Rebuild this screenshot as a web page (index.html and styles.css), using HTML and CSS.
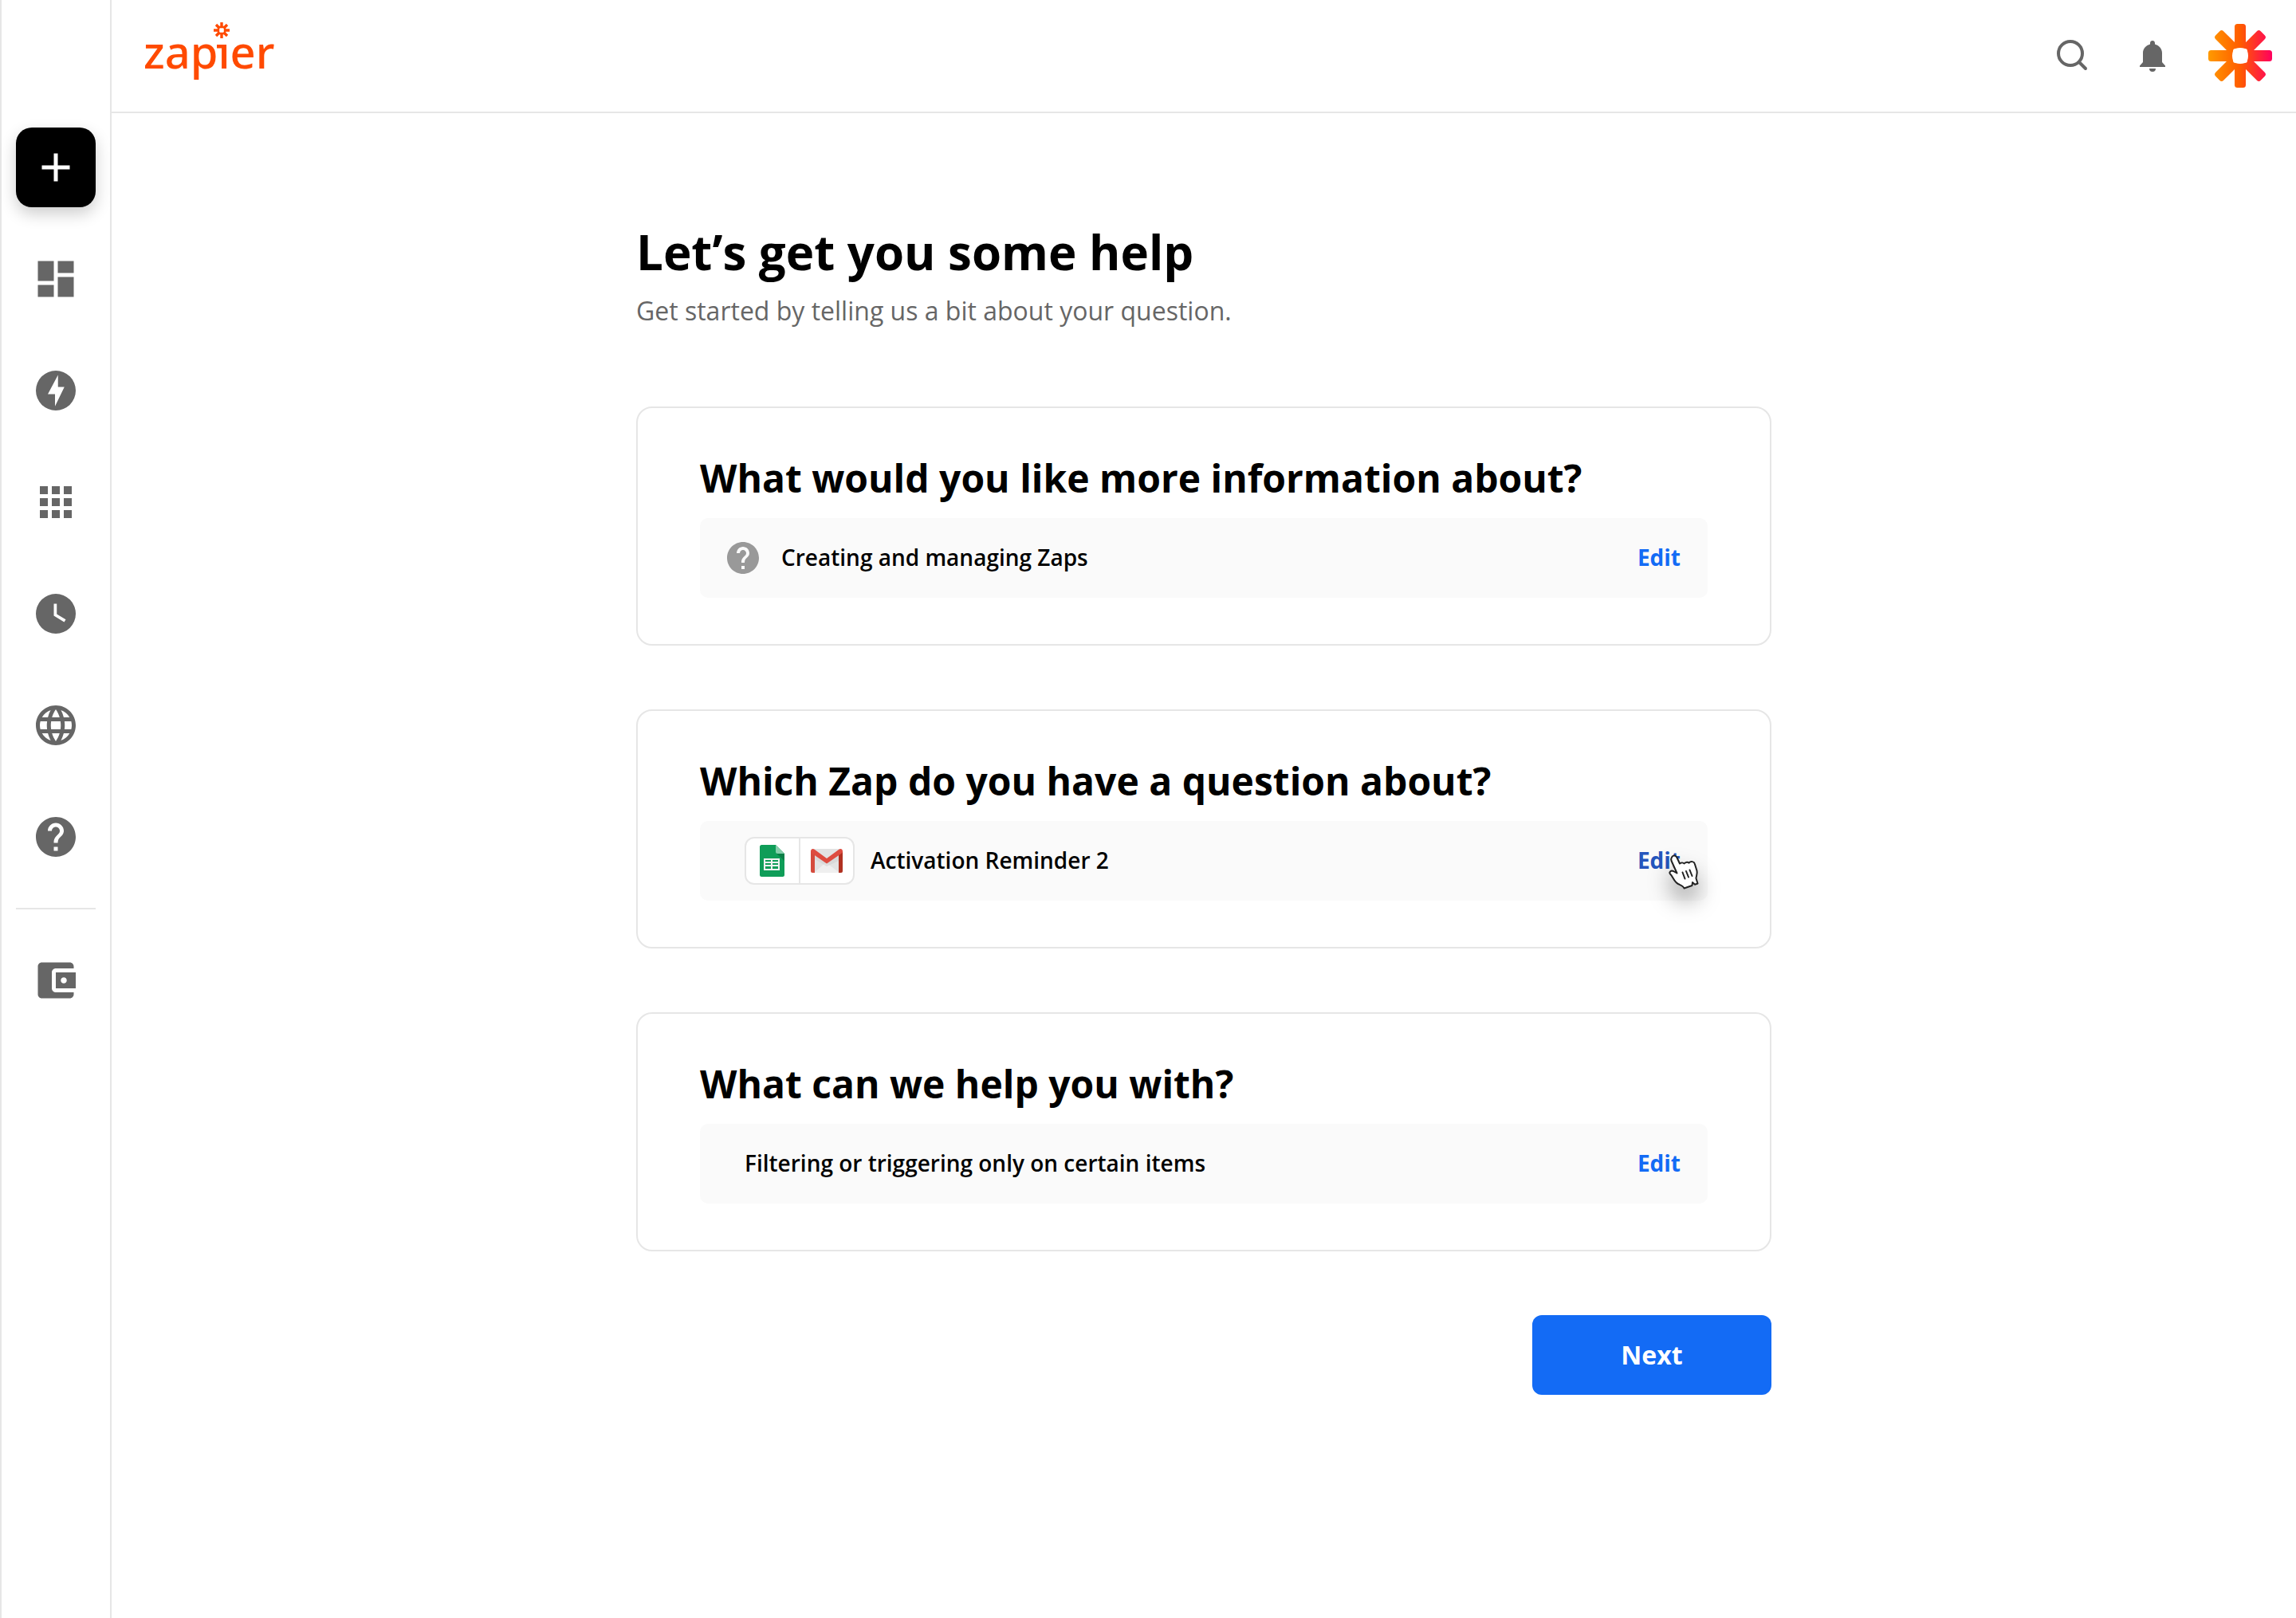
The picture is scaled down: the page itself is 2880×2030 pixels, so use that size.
FILE: index.html
```
<!DOCTYPE html>
<html lang="en">
<head>
    <meta charset="utf-8">
    <title>Get help | Zapier</title>
    <link rel="stylesheet" href="styles.css">
</head>
<body>
    <nav class="sidebar" aria-label="Main">
        <button class="create-btn" aria-label="Create Zap">
            <svg class="icon" viewBox="0 0 24 24"><path d="M19 13h-6v6h-2v-6H5v-2h6V5h2v6h6z"/></svg>
        </button>
        <a class="nav-link" href="#" aria-label="Dashboard">
            <svg class="icon" viewBox="0 0 24 24"><path d="M3 13h8V3H3v10zm0 8h8v-6H3v6zm10 0h8V11h-8v10zm0-18v6h8V3h-8z"/></svg>
        </a>
        <a class="nav-link" href="#" aria-label="Zaps">
            <svg class="icon" viewBox="0 0 24 24"><path fill-rule="evenodd" d="M12 2a10 10 0 1 0 0 20 10 10 0 0 0 0-20zm-.4 17.9v-6.1H8l5.1-9.6v6h3.2z"/></svg>
        </a>
        <a class="nav-link" href="#" aria-label="My Apps">
            <svg class="icon" viewBox="0 0 24 24"><path d="M4 8h4V4H4v4zm6 12h4v-4h-4v4zm-6 0h4v-4H4v4zm0-6h4v-4H4v4zm6 0h4v-4h-4v4zm6-10v4h4V4h-4zm-6 4h4V4h-4v4zm6 6h4v-4h-4v4zm0 6h4v-4h-4v4z"/></svg>
        </a>
        <a class="nav-link" href="#" aria-label="Task History">
            <svg class="icon" viewBox="0 0 24 24"><path fill-rule="evenodd" d="M12 2a10 10 0 1 0 0 20 10 10 0 0 0 0-20zm4.2 14.2L11 13V7h1.5v5.2l4.5 2.7z"/></svg>
        </a>
        <a class="nav-link" href="#" aria-label="Explore">
            <svg class="icon" viewBox="0 0 24 24"><path d="M11.99 2C6.47 2 2 6.48 2 12s4.47 10 9.99 10C17.52 22 22 17.52 22 12S17.52 2 11.99 2zm6.93 6h-2.95c-.32-1.25-.78-2.45-1.38-3.56 1.84.63 3.37 1.91 4.33 3.56zM12 4.04c.83 1.2 1.48 2.53 1.91 3.96h-3.82c.43-1.43 1.08-2.76 1.91-3.96zM4.26 14C4.1 13.36 4 12.69 4 12s.1-1.36.26-2h3.38c-.08.66-.14 1.32-.14 2s.06 1.34.14 2H4.26zm.82 2h2.95c.32 1.25.78 2.45 1.38 3.56-1.84-.63-3.37-1.9-4.33-3.56zm2.95-8H5.08c.96-1.66 2.49-2.93 4.33-3.56C8.81 5.55 8.35 6.75 8.03 8zM12 19.96c-.83-1.2-1.48-2.53-1.91-3.96h3.82c-.43 1.43-1.08 2.76-1.91 3.96zM14.34 14H9.66c-.09-.66-.16-1.32-.16-2s.07-1.35.16-2h4.68c.09.65.16 1.32.16 2s-.07 1.34-.16 2zm.25 5.56c.6-1.11 1.06-2.31 1.38-3.56h2.95c-.96 1.65-2.49 2.93-4.33 3.56zM16.36 14c.08-.66.14-1.32.14-2s-.06-1.34-.14-2h3.38c.16.64.26 1.31.26 2s-.1 1.36-.26 2h-3.38z"/></svg>
        </a>
        <a class="nav-link" href="#" aria-label="Get Help">
            <svg class="icon" viewBox="0 0 24 24"><path d="M12 2C6.48 2 2 6.48 2 12s4.48 10 10 10 10-4.48 10-10S17.52 2 12 2zm1 17h-2v-2h2v2zm2.07-7.75l-.9.92C13.45 12.9 13 13.5 13 15h-2v-.5c0-1.1.45-2.1 1.17-2.83l1.24-1.26c.37-.36.59-.86.59-1.41 0-1.1-.9-2-2-2s-2 .9-2 2H8c0-2.21 1.79-4 4-4s4 1.79 4 4c0 .88-.36 1.68-.93 2.25z"/></svg>
        </a>
        <hr class="divider">
        <a class="nav-link" href="#" aria-label="Billing">
            <svg class="icon" viewBox="0 0 24 24"><path d="M21 18v1c0 1.1-.9 2-2 2H5c-1.11 0-2-.9-2-2V5c0-1.1.89-2 2-2h14c1.1 0 2 .9 2 2v1h-9c-1.11 0-2 .9-2 2v8c0 1.1.89 2 2 2h9zm-9-2h10V8H12v8zm4-2.5c-.83 0-1.5-.67-1.5-1.5s.67-1.5 1.5-1.5 1.5.67 1.5 1.5-.67 1.5-1.5 1.5z"/></svg>
        </a>
    </nav>

    <div class="page">
        <header class="header">
            <a class="logo" href="#">
                <span class="logo-text">zapier</span>
                <svg class="logo-star" viewBox="0 0 20 33">
                    <path d="M10 0v6.5M10 13.5V20M0 10h6.5M13.5 10H20M3 3l4.5 4.5M12.5 12.5L17 17M17 3l-4.5 4.5M7.5 12.5L3 17" stroke="#ff4a00" stroke-width="3.4"/>
                    <rect x="6" y="6" width="8" height="8" rx="1" fill="none" stroke="#ff4a00" stroke-width="2.4"/>
                    <path d="M4 28h7v4.500H4z" fill="#ff4a00"/>
                </svg>
            </a>
            <div class="header-actions">
                <button class="icon-btn" aria-label="Search">
                    <svg class="icon icon-outline" viewBox="0 0 60 60"><circle cx="27" cy="27" r="15"/><path d="M38 38l8 8"/></svg>
                </button>
                <button class="icon-btn" aria-label="Notifications">
                    <svg class="icon" viewBox="0 0 60 60"><path d="M30 11c-1.700 0-3 1.300-3 3v1.500c-5.200 1.300-9 5.700-9 11V38l-4 4.500V44h32v-1.500L42 38V26.500c0-5.300-3.800-9.700-9-11V14c0-1.700-1.300-3-3-3zM26 46a4 4 0 0 0 8 0z"/></svg>
                </button>
                <button class="icon-btn" aria-label="Account">
                    <svg class="avatar" viewBox="0 0 80 80">
                        <defs>
                            <linearGradient id="flame">
                                <stop offset="0" stop-color="#ff9a00"/>
                                <stop offset="0.5" stop-color="#ff5c00"/>
                                <stop offset="1" stop-color="#ff005e"/>
                            </linearGradient>
                            <mask id="star">
                                <g fill="#fff">
                                    <rect x="33" width="14" height="80" rx="3.5"/>
                                    <rect y="33" width="80" height="14" rx="3.5"/>
                                    <rect x="33" width="14" height="80" rx="3.5" transform="rotate(45 40 40)"/>
                                    <rect x="33" width="14" height="80" rx="3.5" transform="rotate(-45 40 40)"/>
                                </g>
                                <path fill="#000" d="M31 34q0-3 3-3 6-2 12 0 3 0 3 3 2 6 0 12 0 3-3 3-6 2-12 0-3 0-3-3-2-6 0-12z"/>
                            </mask>
                        </defs>
                        <rect width="80" height="80" fill="url(#flame)" mask="url(#star)"/>
                    </svg>
                </button>
            </div>
        </header>

        <main class="content">
            <h1>Let’s get you some help</h1>
            <p class="intro">Get started by telling us a bit about your question.</p>

            <section class="card">
                <h2>What would you like more information about?</h2>
                <div class="answer answer-topic">
                    <svg class="topic-icon" viewBox="0 0 24 24"><path d="M12 2C6.48 2 2 6.48 2 12s4.48 10 10 10 10-4.48 10-10S17.52 2 12 2zm1 17h-2v-2h2v2zm2.07-7.75l-.9.92C13.45 12.9 13 13.5 13 15h-2v-.5c0-1.1.45-2.1 1.17-2.83l1.24-1.26c.37-.36.59-.86.59-1.41 0-1.1-.9-2-2-2s-2 .9-2 2H8c0-2.21 1.79-4 4-4s4 1.79 4 4c0 .88-.36 1.68-.93 2.25z"/></svg>
                    <span class="answer-text">Creating and managing Zaps</span>
                    <button class="edit-btn">Edit</button>
                </div>
            </section>

            <section class="card">
                <h2>Which Zap do you have a question about?</h2>
                <div class="answer">
                    <div class="apps">
                        <span class="app">
                            <svg class="app-icon" viewBox="0 0 40 40">
                                <path fill="#0f9d58" d="M7 0h17l11 11v26.500a2.500 2.500 0 0 1-2.500 2.500h-26A2.500 2.500 0 0 1 4 37.500v-35A2.500 2.500 0 0 1 6.500 0z"/>
                                <path fill="#0b7f47" d="M25 11h10v9z"/>
                                <path fill="#87ceac" d="M24 0l11 11H26.500A2.500 2.500 0 0 1 24 8.500z"/>
                                <path fill="#f1f1f1" fill-rule="evenodd" d="M9 17h20v15H9zm2 2v2h7v-2zm9 0v2h7v-2zm-9 4v2h7v-2zm9 0v2h7v-2zm-9 4v3h7v-3zm9 0v3h7v-3z"/>
                            </svg>
                        </span>
                        <span class="app">
                            <svg class="app-icon" viewBox="0 0 40 40">
                                <path fill="#e3e3e3" d="M4 5h32v30H4z"/>
                                <path fill="#efefef" d="M4 35l15-13 17 13z"/>
                                <path fill="#d0d0d0" d="M5 12l15 11 15-11v8L20 27 5 18z" opacity="0.5"/>
                                <path fill="#d54b3d" d="M0 8h5v27H2a2 2 0 0 1-2-2z"/>
                                <path fill="#b03121" d="M35 8h5v25a2 2 0 0 1-2 2h-3z"/>
                                <path fill="#de4c40" d="M0 8c0-3 3-4 5-2l15 11L35 6c2-2 5-1 5 2 0 1-.5 2-1.500 2.700L20 23.500 1.500 10.700C.5 10 0 9 0 8z"/>
                            </svg>
                        </span>
                    </div>
                    <span class="answer-text">Activation Reminder 2</span>
                    <button class="edit-btn edit-btn-hover">Edit
                        <svg class="pointer" viewBox="0 0 40 44">
                            <path d="M4 3.500c1.800-3.300 5.300-2 6.500.5L14 11.500c2-1.500 4.500-1.300 5.500 0 2-2.500 5-2.200 6-.8 2.500-2.800 6.500-1.700 7.200.8l2.800 9c1 4-1 6.500-1 9.500l2 6.500-3.500 1.200-3-2.700-.5 4-10 3.500c-1-3-4.500-4-7.500-5.500-5.500-3-6.500-9.500-10-12.500-2-2 1-5 4-3.500L10.500 23.500 3.500 8c-.6-1.500-.4-3 .5-4.500z"/>
                            <path d="M17.500 22.500l3 8M22 21l3 7.500M26.500 19.500l3 7.500"/>
                        </svg>
                    </button>
                </div>
            </section>

            <section class="card">
                <h2>What can we help you with?</h2>
                <div class="answer">
                    <span class="answer-text">Filtering or triggering only on certain items</span>
                    <button class="edit-btn">Edit</button>
                </div>
            </section>

            <button class="next-btn">Next</button>
        </main>
    </div>
</body>
</html>
```
FILE: styles.css
```
* {
    box-sizing: border-box;
}

body {
    margin: 0;
    min-height: 100vh;
    display: flex;
    font-family: "Open Sans", "Noto Sans", sans-serif;
    color: #000;
    background: #fff;
}

button {
    font-family: inherit;
    border: none;
    padding: 0;
    background: none;
    cursor: pointer;
}

svg {
    display: block;
}

/* Sidebar */

.sidebar {
    width: 140px;
    flex-shrink: 0;
    padding-top: 160px;
    border-left: 2px solid #e6e6e6;
    border-right: 2px solid #e6e6e6;
    display: flex;
    flex-direction: column;
    align-items: center;
    gap: 40px;
}

.icon {
    width: 60px;
    height: 60px;
    fill: #666;
}

.icon-outline {
    fill: none;
    stroke: #666;
    stroke-width: 4px;
    stroke-linecap: round;
}

.create-btn,
.nav-link {
    width: 100px;
    height: 100px;
    display: flex;
    align-items: center;
    justify-content: center;
}

.create-btn {
    background: #000;
    border-radius: 20px;
    box-shadow: 0 8px 20px rgba(0, 0, 0, 0.2);
}

.create-btn .icon {
    fill: #fff;
}

.divider {
    width: 100px;
    height: 2px;
    margin: -1px 0;
    border: none;
    background: #e6e6e6;
}

/* Header */

.page {
    flex: 1;
    min-width: 0;
}

.header {
    height: 142px;
    padding: 0 30px 0 40px;
    border-bottom: 2px solid #e6e6e6;
    display: flex;
    align-items: center;
    justify-content: space-between;
}

.logo {
    position: relative;
    padding-bottom: 12px;
    color: #ff4a00;
    text-decoration: none;
}

.logo-text {
    display: block;
    font-family: "Noto Sans", sans-serif;
    font-size: 56px;
    font-weight: 500;
    line-height: 80px;
    /* hides the dot of the i, the star takes its place */
    clip-path: inset(30px 0 0 0);
}

.logo-star {
    position: absolute;
    top: 4px;
    left: 88px;
    width: 20px;
    height: 33px;
}

.header-actions {
    display: flex;
    align-items: center;
    gap: 40px;
}

.avatar {
    width: 80px;
    height: 80px;
}

/* Help form */

.content {
    max-width: 1424px;
    margin: 0 auto;
    padding: 132px 0 80px;
    display: flex;
    flex-direction: column;
}

h1 {
    margin: 0 0 8px;
    font-size: 60px;
    line-height: 84px;
    font-weight: 700;
}

.intro {
    margin: 0 0 96px;
    font-size: 32px;
    line-height: 48px;
    color: #666;
}

.card {
    margin-bottom: 80px;
    padding: 56px 78px 58px;
    border: 2px solid #e6e6e6;
    border-radius: 20px;
}

h2 {
    margin: 0 0 18px;
    font-size: 48px;
    line-height: 64px;
    font-weight: 700;
}

.answer {
    min-height: 100px;
    padding: 0 34px 0 56px;
    background: #fafafa;
    border-radius: 10px;
    display: flex;
    align-items: center;
    gap: 20px;
}

.answer-topic {
    padding-left: 30px;
    gap: 24px;
}

.topic-icon {
    width: 48px;
    height: 48px;
    fill: #999;
}

.answer-text {
    flex: 1;
    padding-bottom: 2px;
    font-size: 28px;
    line-height: 40px;
    font-weight: 600;
}

.apps {
    display: flex;
    height: 60px;
    border: 2px solid #e6e6e6;
    border-radius: 12px;
    background: #fff;
}

.app {
    width: 66px;
    display: flex;
    align-items: center;
    justify-content: center;
}

.app + .app {
    width: 68px;
    border-left: 2px solid #e6e6e6;
}

.app-icon {
    width: 40px;
    height: 40px;
}

.edit-btn {
    position: relative;
    padding-bottom: 2px;
    font-size: 28px;
    line-height: 40px;
    font-weight: 700;
    color: #136bf5;
}

.edit-btn:hover,
.edit-btn-hover {
    color: #2556bd;
}

.pointer {
    position: absolute;
    top: 13px;
    left: 39px;
    width: 40px;
    height: 44px;
    overflow: visible;
    fill: #fff;
    stroke: #222;
    stroke-width: 2px;
    stroke-linejoin: round;
    stroke-linecap: round;
    filter: drop-shadow(0 16px 14px rgba(0, 0, 0, 0.35));
}

.next-btn {
    align-self: flex-end;
    width: 300px;
    height: 100px;
    padding-bottom: 2px;
    border-radius: 12px;
    background: #136bf5;
    color: #fff;
    font-size: 32px;
    font-weight: 700;
}
```
